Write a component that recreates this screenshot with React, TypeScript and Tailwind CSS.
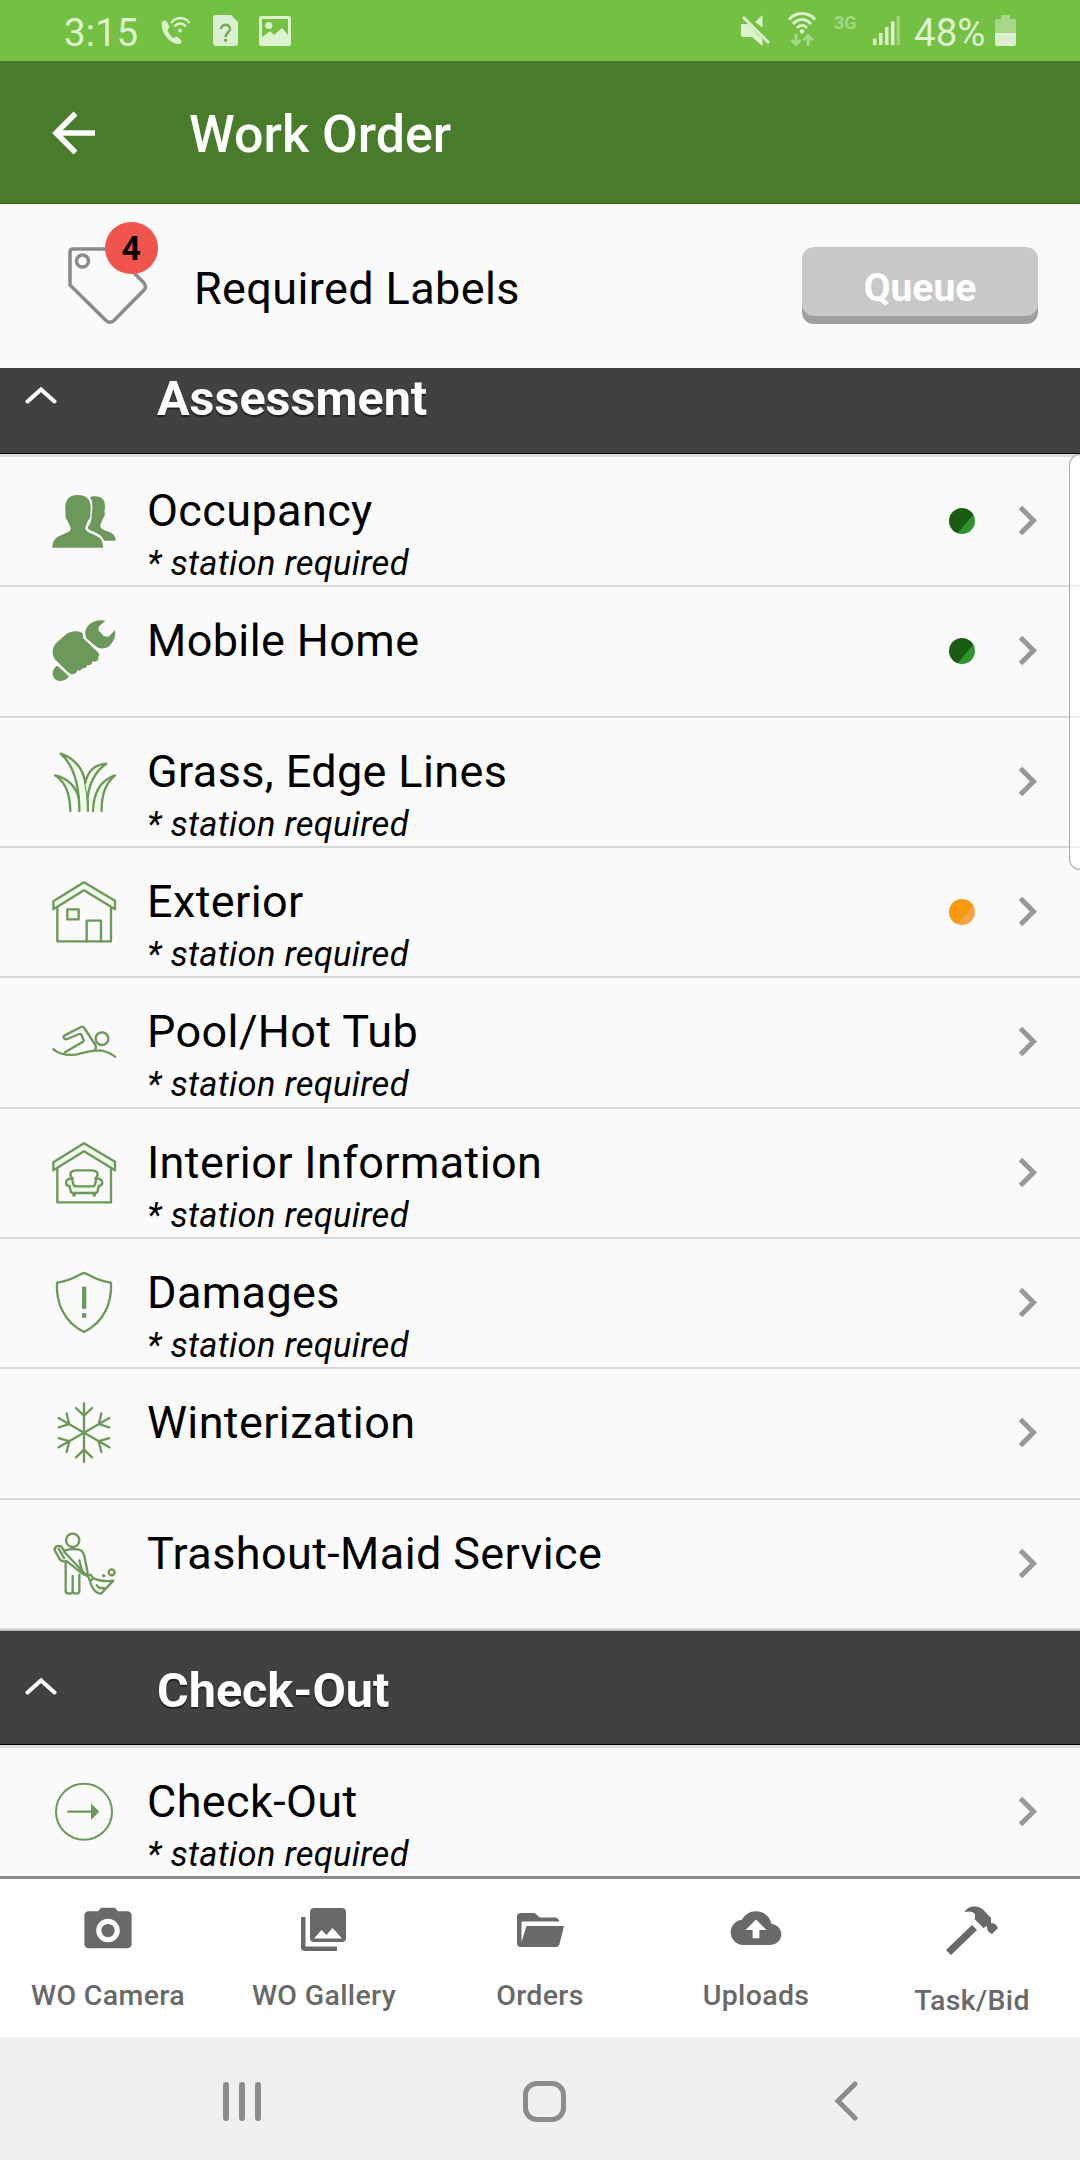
import React from "react";
import { IoMdCamera, IoMdCloudUpload } from "react-icons/io";

interface StationProps {
  name: string;
  icon: React.ReactNode;
  required?: boolean;
  status?: "done" | "partial";
}

interface SectionProps {
  title: string;
  className: string;
}

interface TabProps {
  label: string;
  icon: React.ReactNode;
  labelClass?: string;
}

function StationIcon({ children }: { children: React.ReactNode }) {
  return (
    <svg
      viewBox="0 0 192 192"
      className="w-16 h-16 shrink-0 overflow-visible"
      fill="none"
      stroke="#6c9859"
      strokeWidth="7"
      strokeLinecap="round"
      strokeLinejoin="round"
    >
      {children}
    </svg>
  );
}

const people = (
  <StationIcon>
    <g fill="#6c9859" stroke="none">
      <path d="M1 176C2 150 14 144 34 136C48 130 56 127 56 118C54 108 49 104 47 95C42 92 39 84 41 74C37 48 40 18 77 18C114 18 119 44 115 70C117 84 112 92 107 96C105 104 100 110 100 118C101 127 110 131 126 137C144 144 153 152 153 176Z" />
      <path d="M114 25C122 20 146 20 154 32C161 42 159 58 157 68C160 74 158 84 153 88C151 97 146 101 145 110C145 117 150 121 166 127C182 133 191 140 191 155L156 155C150 138 136 132 118 125C108 122 105 118 110 110C118 100 119 90 119 76C123 56 122 35 114 25Z" />
    </g>
  </StationIcon>
);

const wrench = (
  <StationIcon>
    <g fill="#6c9859" stroke="none">
      <path d="M160 6C135-1 105 12 100 38C99 50 102 58 108 62L132 82C140 90 158 90 168 84C184 72 193 52 189 33L170 53L156 52L139 34L141 22Z" />
      <path d="M2 98C2 86 8 78 15 70L44 44C58 34 86 34 93 44C91 51 93 58 98 62L140 102C143 108 141 112 138 115C143 122 134 131 121 127C122 134 114 142 105 138C104 146 98 150 92 147C88 154 82 157 76 154C74 162 66 167 58 166C52 164 46 158 42 154L10 122C4 116 2 106 2 98Z" />
      <path d="M16 140C0 150-3 168 9 180C22 191 42 186 51 172Z" />
    </g>
  </StationIcon>
);

const grass = (
  <StationIcon>
    <g fill="#effce9">
      <path d="M55 183C54 140 46 100 9 76C48 84 74 112 82 150" />
      <path d="M82 183C82 120 70 50 26 11C74 28 96 60 101 105C107 130 108 150 108 183" />
      <path d="M100 98C108 62 130 43 163 41C132 60 112 100 107 142" />
      <path d="M123 183C124 135 142 92 189 76C160 100 148 140 149 183" />
    </g>
  </StationIcon>
);

const houseShell = (
  <>
    <path d="M16 82V184H177V82" />
    <path d="M96 7L189 62V88L96 31L4 88V64Z" fill="#effce9" />
  </>
);

const house = (
  <StationIcon>
    {houseShell}
    <path d="M46 88H80V118H46Z" fill="#effce9" />
    <path d="M104 184V122H147V184" />
  </StationIcon>
);

const swimmer = (
  <StationIcon>
    <path d="M4 118C22 132 44 138 75 133C100 128 116 121 142 121C160 122 176 130 189 140" />
    <path d="M39 127L93 95Q97 92 95 89L87 72Q85 71 82 72L46 87C37 90 30 80 38 76L87 51Q93 48 97 54L130 105Q134 111 130 119" />
    <circle cx="150" cy="86" r="19" />
  </StationIcon>
);

const livingRoom = (
  <StationIcon>
    {houseShell}
    <path d="M62 113C48 98 58 88 72 88H120C134 88 144 98 130 113" />
    <path d="M60 114C50 110 42 118 42 125C42 132 48 135 53 135L56 150C57 155 60 156 64 156H129C133 156 136 154 137 150L140 135C146 134 151 131 151 125C151 118 143 110 133 114L129 130C128 134 126 136 122 136H72C67 136 65 134 64 130Z" fill="#effce9" />
    <path d="M66 158V162M127 158V162" strokeWidth="11" />
  </StationIcon>
);

const shield = (
  <StationIcon>
    <path d="M96 6C108 6 128 30 177 35C180 90 160 152 96 183C32 152 12 90 15 35C64 30 84 6 96 6Z" />
    <path d="M90 47H103V113H90ZM90 127H103V140H90Z" fill="#6c9859" stroke="none" />
  </StationIcon>
);

const snowflake = (
  <StationIcon>
    {[0, 60, 120, 180, 240, 300].map((angle) => (
      <path key={angle} d="M96 95V7M72 21L96 44L120 21" transform={`rotate(${angle} 96 95)`} />
    ))}
  </StationIcon>
);

const sweeper = (
  <StationIcon>
    <circle cx="62" cy="25" r="20" />
    <path d="M41 90V178C41 187 62 187 62 178V132M62 178C62 187 82 187 82 178V128" />
    <path d="M37 57C46 50 78 49 88 56C96 62 98 74 100 86L107 122C104 130 96 130 92 124L82 85" />
    <path d="M37 57L28 44C20 38 6 44 8 54L22 80C28 90 34 88 40 88M20 50L36 78" />
    <path d="M37 60L105 132M42 86L90 124" />
    <path d="M107 130L116 128L124 139C146 148 166 149 184 146L152 180C148 186 140 186 134 181C120 170 116 160 114 146ZM124 139L114 148M134 160C140 168 148 170 156 168" />
    <circle cx="179" cy="121" r="9" />
    <circle cx="155" cy="131" r="5" fill="#6c9859" stroke="none" />
  </StationIcon>
);

const arrowCircle = (
  <StationIcon>
    <circle cx="96" cy="95" r="84" strokeWidth="6" />
    <path d="M49 95H122" strokeWidth="7" />
    <path d="M117 70L142 95L117 120Z" fill="#6c9859" stroke="none" />
  </StationIcon>
);

const stations: StationProps[] = [
  { name: "Occupancy", icon: people, required: true, status: "done" },
  { name: "Mobile Home", icon: wrench, status: "done" },
  { name: "Grass, Edge Lines", icon: grass, required: true },
  { name: "Exterior", icon: house, required: true, status: "partial" },
  { name: "Pool/Hot Tub", icon: swimmer, required: true },
  { name: "Interior Information", icon: livingRoom, required: true },
  { name: "Damages", icon: shield, required: true },
  { name: "Winterization", icon: snowflake },
  { name: "Trashout-Maid Service", icon: sweeper },
];

function StatusBar() {
  return (
    <div className="h-[61px] bg-[#73c043] flex items-start justify-between pl-[64px] pr-[64px] text-[#dcf3cd]">
      <div className="flex items-start">
        <span className="w-[96px] pt-[11px] text-[38.5px] leading-[44px]">3:15</span>
        <svg className="w-[30px] h-[28px] mt-[17px]" viewBox="0 0 30 28" fill="none" stroke="currentColor">
          <path d="M2 5C0 14 9 27 19 27C21 27 22 25 21 23L17 19.500L13.500 21C11 20 8.500 16 7.500 13L9.500 10L7 5C5.500 3 3 3 2 5Z" fill="currentColor" stroke="none" />
          <path d="M11 6C16-.500 25-.500 29.500 6M14.500 9.500C18 5.500 22.500 5.500 26 9.500" strokeWidth="2.400" />
          <circle cx="20" cy="13.500" r="1.900" fill="currentColor" stroke="none" />
        </svg>
        <svg className="w-[25px] h-[31px] mt-[15px] ml-[23px]" viewBox="0 0 25 31">
          <path d="M3 0H18L25 7V28Q25 31 22 31H3Q0 31 0 28V3Q0 0 3 0Z" fill="#dcefd0" />
          <path d="M8 14C8 8.500 17 8.500 17 14C17 17.500 12.500 17.500 12.500 22" fill="none" stroke="#73ae55" strokeWidth="2.600" />
          <circle cx="12.500" cy="25.300" r="1.700" fill="#73ae55" />
        </svg>
        <svg className="w-[32px] h-[30px] mt-[16px] ml-[21px]" viewBox="0 0 32 30">
          <path fillRule="evenodd" d="M2 0H30Q32 0 32 2V28Q32 30 30 30H2Q0 30 0 28V2Q0 0 2 0ZM3 3V21L11 15L15 19L23 12L29 19V3Z" fill="currentColor" />
          <circle cx="9.800" cy="9.500" r="3.500" fill="currentColor" />
        </svg>
      </div>
      <div className="flex items-start">
        <svg className="w-[30px] h-[32px] mt-[15px]" viewBox="0 0 30 32" fill="currentColor">
          <path d="M14 7L21.500 0V12.500ZM0 9H7L21.500 24V31L11 22H2Q0 22 0 20Z" />
          <path d="M2 2L28 28" stroke="currentColor" strokeWidth="3" />
        </svg>
        <svg className="w-[28px] h-[35px] mt-[12px] ml-[17px]" viewBox="0 0 28 35" fill="none" stroke="currentColor">
          <path d="M1 7.500C8-.500 20-.500 27 7.500M5 12C10.500 6 17.500 6 23 12M9 16C12 12.500 16 12.500 19 16" strokeWidth="2.900" />
          <circle cx="14" cy="19.500" r="2.200" fill="currentColor" stroke="none" />
          <path d="M8 22V32M3.500 28L8 32.500L12.500 28M20 34V24M15.500 28L20 23.500L24.500 28" strokeWidth="3" opacity=".5" />
        </svg>
        <span className="w-[25px] ml-[18px] mt-[13px] text-[18px] leading-[20px] font-bold text-[#a2d884]">3G</span>
        <svg className="w-[27px] h-[29px] mt-[16px] ml-[14px]" viewBox="0 0 27 29" fill="currentColor">
          <path d="M0 22.500H3.500V29H0ZM6 17H9.500V29H6ZM12 11H15.500V29H12ZM18 5.500H21.500V29H18Z" />
          <path d="M23.500 0H27V29H23.500Z" opacity=".4" />
        </svg>
        <span className="w-[81px] ml-[14px] pt-[11px] text-[38.5px] leading-[44px]">48%</span>
        <svg className="w-[21px] h-[31px] mt-[15px]" viewBox="0 0 21 31" fill="#dcefd0">
          <path d="M6 0H15V4H19Q21 4 21 6V18H0V6Q0 4 2 4H6Z" opacity=".5" />
          <path d="M0 18H21V29Q21 31 19 31H2Q0 31 0 29Z" />
        </svg>
      </div>
    </div>
  );
}

function Section({ title, className }: SectionProps) {
  return (
    <div className={`${className} bg-[#414042] border-b border-black flex items-center pl-[25px]`}>
      <svg className="w-8 h-[18px] shrink-0 -mt-[9px]" viewBox="0 0 32 18" fill="none" stroke="#fff" strokeWidth="4">
        <path d="M2.500 15.500L16 3.500L29.500 15.500" strokeLinecap="round" />
      </svg>
      <h2 className="ml-[100px] text-[48.5px] leading-[56px] font-bold text-white [text-shadow:0_2px_1px_#222]">{title}</h2>
    </div>
  );
}

function Station({ name, icon, required, status }: StationProps) {
  return (
    <div className="h-[130.34px] border-b-2 border-[#d8d8d8] flex items-center pl-[52px] pr-[42px]">
      {icon}
      <div className="flex-1 self-start ml-[31px] pt-[28px] text-black">
        <p className="text-[45px] leading-[52px] tracking-[0.38px]">{name}</p>
        {required && <p className="mt-[6px] text-[34.5px] leading-[40px] tracking-[0.3px] italic">* station required</p>}
      </div>
      {status === "done" && (
        <span className="w-[26px] h-[26px] mr-[43px] rounded-full bg-[linear-gradient(130deg,#1b5c13_62%,#2f9430_63%)]" />
      )}
      {status === "partial" && (
        <span className="w-[26px] h-[26px] mr-[43px] rounded-full bg-[linear-gradient(130deg,#f9990f_62%,#f4a549_63%)]" />
      )}
      <svg className="w-5 h-8" viewBox="0 0 20 32" fill="none" stroke="#989898" strokeWidth="5">
        <path d="M2.500 2.500L15.500 15.500L2.500 28.500" />
      </svg>
    </div>
  );
}

function Tab({ label, icon, labelClass = "mt-[24px]" }: TabProps) {
  return (
    <div className="w-[216px] flex flex-col items-center pt-[22px] text-[#696969]">
      {icon}
      <span className={`${labelClass} text-[28.5px] leading-[34px] tracking-[0.35px] font-medium`}>{label}</span>
    </div>
  );
}

function App() {
  return (
    <div className="relative w-[1080px] h-[2160px] overflow-hidden flex flex-col bg-[#fafafa] font-[Roboto,sans-serif]">
      <StatusBar />

      <header className="h-[143px] shrink-0 bg-[#487c2b] border-b border-[#35611d] flex items-center pl-[52px]">
        <svg className="w-[44px] h-[44px] mt-[2px]" viewBox="0 0 44 44" fill="none" stroke="#fff" strokeWidth="5.500">
          <path d="M43 22H4M23.500 2.500L4 22L23.500 41.500" />
        </svg>
        <h1 className="ml-[93px] mt-[5px] text-[52px] leading-[60px] font-medium text-white">Work Order</h1>
      </header>

      <div className="h-[164px] shrink-0 flex items-center pl-[68px] pr-[42px]">
        <div className="relative">
          <svg className="w-[80px] h-[78px]" viewBox="0 0 80 78" fill="none" stroke="#8b8b8b" strokeWidth="3.500">
            <path d="M5 2H42L76 36Q79 40 76 43L46 73.500Q42 77 38 73.500L2 38V5Q2 2 5 2Z" />
            <circle cx="14.500" cy="14" r="6" />
          </svg>
          <span className="absolute left-[37px] -top-[25px] w-[53px] h-[52px] rounded-full bg-[#f0544c] text-black text-[33.5px] font-bold flex items-center justify-center pt-[2px] pr-[1px]">4</span>
        </div>
        <p className="ml-[46px] mt-[6px] flex-1 text-[45px] leading-[52px] tracking-[0.38px] text-black">Required Labels</p>
        <button className="w-[236px] h-[77px] -mt-[2px] rounded-xl bg-[#c8c8c8] shadow-[inset_0_-8px_0_#9f9f9f] pt-[6px] text-white text-[39px] leading-[46px] font-bold">Queue</button>
      </div>

      <main className="h-[1508px] shrink-0 overflow-hidden">
        <Section title="Assessment" className="h-[86px] pb-[23px]" />
        <div className="border-t-3 border-b border-t-[#dedede] border-b-[#b5b5b5]">
          {stations.map((station) => (
            <Station key={station.name} {...station} />
          ))}
        </div>
        <Section title="Check-Out" className="h-[114px] pt-[7px]" />
        <div className="border-t-3 border-[#dedede]">
          <Station name="Check-Out" icon={arrowCircle} required />
        </div>
      </main>

      <nav className="h-[161px] shrink-0 bg-white border-t-3 border-[#8a8a8a] flex">
        <Tab label="WO Camera" icon={<IoMdCamera className="w-[54px] h-[54px]" />} />
        <Tab
          label="WO Gallery"
          icon={
            <svg className="w-[54px] h-[54px]" viewBox="0 0 54 54" fill="currentColor">
              <path fillRule="evenodd" d="M17 7H45Q49 7 49 11V37Q49 41 45 41H17Q13 41 13 37V11Q13 7 17 7ZM17 37.500H45L35.500 27L29.500 34L24.500 29Z" />
              <path d="M4 16H8.500V45.500H40V50H8Q4 50 4 46Z" />
            </svg>
          }
        />
        <Tab
          label="Orders"
          icon={
            <svg className="w-[54px] h-[54px]" viewBox="0 0 54 54" fill="currentColor">
              <path fillRule="evenodd" d="M8 12H21.500L27 16.500H42Q45 16.500 46.500 20.500H8.500V41L13.500 25H51L46.500 43Q45.500 46 43 46H8Q4 46 4 42V16Q4 12 8 12Z" />
            </svg>
          }
        />
        <Tab label="Uploads" icon={<IoMdCloudUpload className="w-[54px] h-[54px]" />} />
        <Tab
          label="Task/Bid"
          labelClass="mt-[29px]"
          icon={
            <svg className="w-[54px] h-[54px]" viewBox="0 0 54 54" fill="currentColor">
              <path d="M1 49L27 24L32 29L6 54Z" />
              <path d="M19.500 11C23 4 33 4 38 8.500L46 17V22C49 22 51 23 53 27L47 33C43 31 42 29 42 25L38.500 27L29.500 18C32 12 27 9 19.500 11Z" />
            </svg>
          }
        />
      </nav>

      <div className="h-[123px] shrink-0 bg-[#f0f0f0] flex items-center pt-[5px] pl-[223px] text-[#8c8c8c]">
        <div className="flex gap-[10px]">
          <span className="w-[6px] h-[39px] rounded-full bg-current" />
          <span className="w-[6px] h-[39px] rounded-full bg-current" />
          <span className="w-[6px] h-[39px] rounded-full bg-current" />
        </div>
        <span className="ml-[262px] w-[43px] h-[41px] rounded-[14px] border-[5px] border-current" />
        <svg className="ml-[268px] w-6 h-10" viewBox="0 0 24 40" fill="none" stroke="currentColor" strokeWidth="5">
          <path d="M21 3L4 20L21 37" strokeLinecap="round" />
        </svg>
      </div>

      {/* edge panel handle */}
      <div className="absolute right-0 top-[454px] w-[11px] h-[416px] rounded-l-[14px] border border-r-0 border-[#aaa] bg-white/60" />
    </div>
  );
}

export default App;
